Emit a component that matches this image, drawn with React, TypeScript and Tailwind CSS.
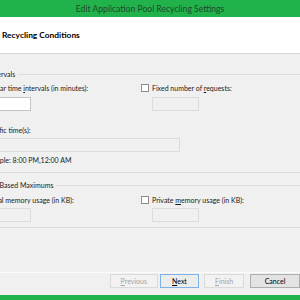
import React from 'react'

const Check = () => (
  <div className="w-[8px] h-[8px] shrink-0 bg-white border border-[#8c8c8c]" />
)

const App = () => {
  return (
    <div className="w-[300px] h-[300px] overflow-hidden bg-[#f0f0f0] flex flex-col font-['Lato',sans-serif] text-[7px] leading-[10px] text-[#1a1a1a]">
      {/* Title bar */}
      <div className="h-[17px] shrink-0 bg-[#22b24c] flex items-center justify-center text-[8.6px] text-[#1f4a2b]">
        Edit Application Pool Recycling Settings
      </div>

      {/* Header */}
      <div className="h-[37px] shrink-0 bg-white border-b border-[#d6d6d6] flex items-center pl-[2px] font-bold text-[8.4px] text-black">
        Recycling Conditions
      </div>

      {/* Body, shifted left as in the cropped dialog */}
      <div className="flex-1 flex flex-col -ml-[28px] w-[380px]">
        {/* Time Intervals group */}
        <div className="mt-[15px] flex items-center gap-[3px] h-[10px]">
          <span className="shrink-0">Time Intervals</span>
          <div className="flex-1 border-t border-[#dcdcdc]" />
        </div>
        <div className="mt-[4px] flex">
          <div className="w-[169px] flex flex-col">
            <div className="flex items-center gap-[3px] h-[10px]">
              <Check />
              <span>
                Regular time <span className="underline">i</span>ntervals (in minutes):
              </span>
            </div>
            <div className="mt-[4px] ml-[11px] w-[48px] h-[14px] bg-white border border-[#c5c5c5]" />
          </div>
          <div className="flex flex-col">
            <div className="flex items-center gap-[3px] h-[10px]">
              <Check />
              <span>
                Fixed number of <span className="underline">r</span>equests:
              </span>
            </div>
            <div className="mt-[4px] ml-[11px] w-[47px] h-[14px] border border-[#dcdcdc]" />
          </div>
        </div>
        <div className="mt-[14px] flex items-center gap-[3px] h-[10px]">
          <Check />
          <span>Specific time(s):</span>
        </div>
        <div className="mt-[3px] ml-[11px] w-[197px] h-[14px] border border-[#dcdcdc]" />
        <div className="mt-[3px] ml-[11px] h-[10px]">Example: 8:00 PM,12:00 AM</div>
        <div className="mt-[7px] border-t border-[#dcdcdc]" />

        {/* Memory Based Maximums group */}
        <div className="mt-[7px] flex items-center gap-[3px] h-[10px]">
          <span className="shrink-0">Memory Based Maximums</span>
          <div className="flex-1 border-t border-[#dcdcdc]" />
        </div>
        <div className="mt-[5px] flex">
          <div className="w-[169px] flex flex-col">
            <div className="flex items-center gap-[3px] h-[10px]">
              <Check />
              <span>Virtual memory usage (in KB):</span>
            </div>
            <div className="mt-[3px] ml-[11px] w-[48px] h-[14px] border border-[#dcdcdc]" />
          </div>
          <div className="flex flex-col">
            <div className="flex items-center gap-[3px] h-[10px]">
              <Check />
              <span>
                Private <span className="underline">m</span>emory usage (in KB):
              </span>
            </div>
            <div className="mt-[3px] ml-[11px] w-[47px] h-[14px] border border-[#dcdcdc]" />
          </div>
        </div>
        <div className="mt-[5px] border-t border-[#dcdcdc]" />
      </div>

      {/* Footer */}
      <div className="shrink-0 border-t border-[#fbfbfb] pt-[1px]">
        <div className="flex h-[14px]">
          <div className="ml-[110px] w-[60px] h-[14px] border border-[#dadada] bg-[#f2f2f2] flex items-center justify-center text-[#a3a3a3]">
            <span><span className="underline">P</span>revious</span>
          </div>
          <div className="ml-[2px] w-[50px] h-[14px] border border-[#7fb2e5] bg-[#ececec] flex items-center justify-center text-black">
            <span><span className="underline">N</span>ext</span>
          </div>
          <div className="ml-[5px] w-[50px] h-[14px] border border-[#dadada] bg-[#f2f2f2] flex items-center justify-center text-[#a3a3a3]">
            <span><span className="underline">F</span>inish</span>
          </div>
          <div className="ml-[6px] w-[50px] h-[14px] shrink-0 border border-[#adadad] bg-[#e3e3e3] flex items-center justify-center text-black">
            <span>Cancel</span>
          </div>
        </div>
        <div className="mt-[7px] h-[5px] bg-[#22b24c]" />
      </div>
    </div>
  )
}

export default App
